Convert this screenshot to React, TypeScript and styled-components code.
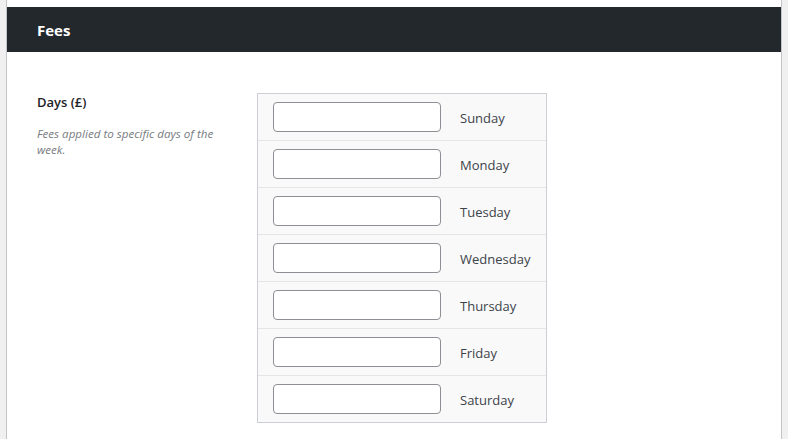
import React from "react";
import styled, { createGlobalStyle } from "styled-components";

const Global = createGlobalStyle`
  html, body { margin: 0; padding: 0; background: #f0f0f1; }
  body { font-family: "Open Sans", "Noto Sans", sans-serif; color: #3c434a; }
`;

const Page = styled.div`
  padding: 0 6px;
  min-height: 439px;
  box-sizing: border-box;
`;

const Card = styled.section`
  background: #fff;
  border-left: 1px solid #c3c4c7;
  border-right: 1px solid #c3c4c7;
  padding-top: 7px;
  min-height: 439px;
  box-sizing: border-box;
`;

const Header = styled.h2`
  margin: 0;
  height: 45px;
  background: #23282d;
  color: #fff;
  font-size: 15px;
  font-weight: 700;
  display: flex;
  align-items: center;
  padding: 0 30px;
  box-sizing: border-box;
`;

const Body = styled.div`
  display: flex;
  padding: 41px 30px 0 30px;
`;

const LabelCol = styled.div`
  width: 220px;
  flex: none;
`;

const FieldLabel = styled.div`
  font-size: 13px;
  font-weight: 600;
  color: #1d2327;
  line-height: 18px;
`;

const Desc = styled.p`
  margin: 15px 0 0;
  width: 195px;
  font-size: 11.6px;
  font-style: italic;
  color: #787c82;
  line-height: 16px;
`;

const DayTable = styled.div`
  background: #f9f9f9;
  border: 1px solid #ccd0d4;
  width: 288px;
  display: flex;
  flex-direction: column;
`;

const Row = styled.div`
  display: flex;
  align-items: center;
  height: 46px;
  padding: 0 0 0 15px;
  & + & { border-top: 1px solid #e5e5e5; }
`;

const Input = styled.input`
  width: 168px;
  height: 30px;
  box-sizing: border-box;
  border: 1px solid #8c8f94;
  border-radius: 4px;
  background: #fff;
  margin: 0 19px 0 0;
  padding: 0 8px;
  font-family: inherit;
`;

const DayName = styled.span`
  font-size: 13px;
  color: #3c434a;
  padding-top: 2px;
`;

const days = ["Sunday", "Monday", "Tuesday", "Wednesday", "Thursday", "Friday", "Saturday"];

export default function App() {
  return (
    <>
      <Global />
      <Page>
        <Card>
          <Header>Fees</Header>
          <Body>
            <LabelCol>
              <FieldLabel>Days (£)</FieldLabel>
              <Desc>Fees applied to specific days of the week.</Desc>
            </LabelCol>
            <DayTable>
              {days.map((d) => (
                <Row key={d}>
                  <Input type="text" />
                  <DayName>{d}</DayName>
                </Row>
              ))}
            </DayTable>
          </Body>
        </Card>
      </Page>
    </>
  );
}
